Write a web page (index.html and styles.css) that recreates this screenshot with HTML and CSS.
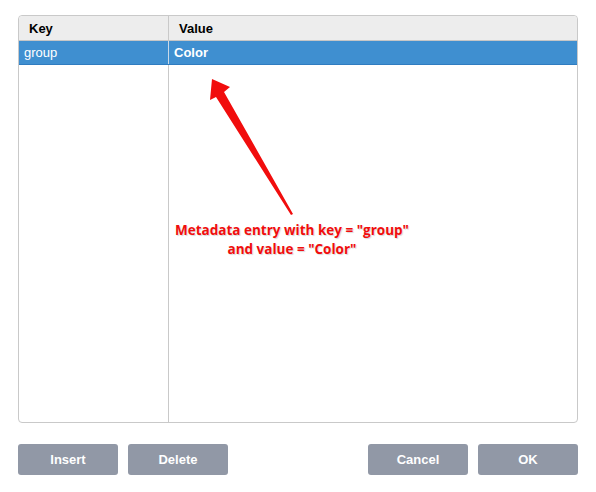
FILE: index.html
```html
<!DOCTYPE html>
<html>
<head>
<meta charset="utf-8">
<link rel="stylesheet" href="styles.css">
</head>
<body>
<div class="dialog">
  <div class="table">
    <div class="head">
      <div class="cell key">Key</div>
      <div class="cell val">Value</div>
    </div>
    <div class="row selected">
      <div class="cell key">group</div>
      <div class="cell val strong">Color</div>
    </div>
    <div class="body">
      <div class="col key"></div>
      <div class="col val"></div>
    </div>
    <svg class="arrow" width="596" height="492" viewBox="0 0 596 492">
      <polygon points="212,79 230,87 224,92 293,214 291,215 216,97 210,100" fill="#f10d0d"/>
    </svg>
    <div class="note">Metadata entry with key = "group"<br>and value = "Color"</div>
  </div>
  <div class="buttons">
    <div class="group">
      <button class="btn">Insert</button>
      <button class="btn">Delete</button>
    </div>
    <div class="group">
      <button class="btn">Cancel</button>
      <button class="btn">OK</button>
    </div>
  </div>
</div>
</body>
</html>
```
FILE: styles.css
```css
html, body {
  margin: 0;
  padding: 0;
  background: #fff;
}
body {
  width: 596px;
  height: 492px;
  font-family: "Liberation Sans", Arial, sans-serif;
}
.dialog {
  padding: 15px 18px 0 18px;
  display: flex;
  flex-direction: column;
}
.table {
  position: relative;
  height: 406px;
  border: 1px solid #c9c9c9;
  border-radius: 4px;
  display: flex;
  flex-direction: column;
  overflow: visible;
}
.head {
  display: flex;
  height: 24px;
  background: #ededed;
  border-bottom: 1px solid #c6c6c6;
  border-radius: 4px 4px 0 0;
  font-weight: bold;
  font-size: 13px;
  color: #000;
}
.row {
  display: flex;
  height: 23px;
  font-size: 13px;
}
.selected {
  background: #3f8fd0;
  color: #fff;
  border-bottom: 1px solid #2f7cc0;
}
.cell {
  display: flex;
  align-items: center;
  box-sizing: border-box;
}
.key {
  width: 150px;
  flex: none;
  box-sizing: border-box;
  border-right: 1px solid #c9c9c9;
}
.val {
  flex: 1;
}
.head .cell { padding-left: 10px; }
.row .cell { padding-left: 5px; }
.selected .key { border-right-color: #c9d9e8; }
.strong { font-weight: bold; }
.body {
  flex: 1;
  display: flex;
}
.col.key { border-right: 1px solid #c9c9c9; }
.arrow {
  position: absolute;
  left: -19px;
  top: -16px;
  pointer-events: none;
}
.note {
  position: absolute;
  left: 138px;
  top: 205px;
  width: 270px;
  text-align: center;
  font-family: "Open Sans", sans-serif;
  font-weight: bold;
  font-size: 13.5px;
  line-height: 19px;
  color: #f10d0d;
  text-shadow: 1px 1px 1px #d8d8d8, 0 0 2px #fff;
}
.buttons {
  display: flex;
  justify-content: space-between;
  margin-top: 21px;
}
.group {
  display: flex;
  gap: 10px;
}
.btn {
  width: 100px;
  height: 31px;
  border: none;
  border-radius: 3px;
  background: #9198a6;
  color: #fff;
  font-family: "Liberation Sans", Arial, sans-serif;
  font-weight: bold;
  font-size: 13px;
  padding: 0;
}
```
